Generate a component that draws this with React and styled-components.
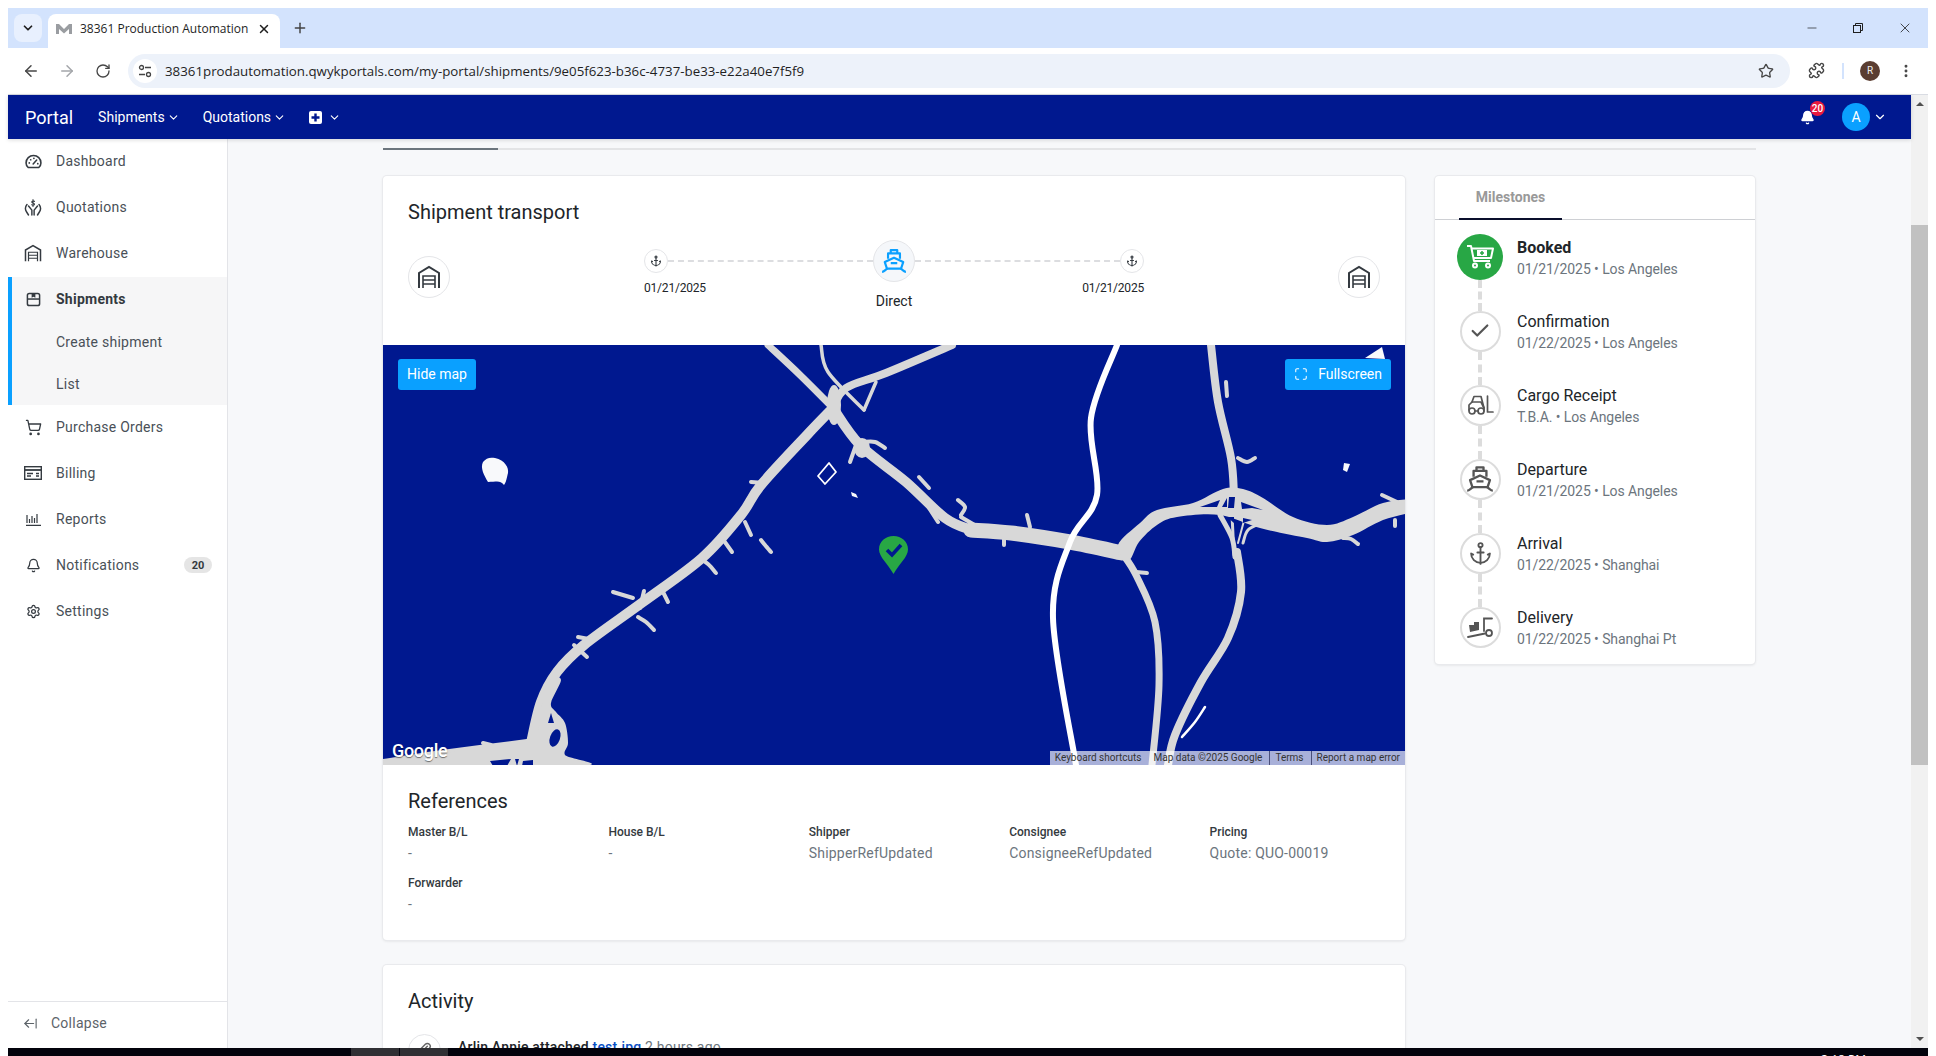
import React from 'react';
import styled, { createGlobalStyle } from 'styled-components';
import {
  Anchor,
  ArrowLeft,
  ArrowLeftFromLine,
  ArrowRight,
  Bell,
  Check,
  ChevronDown,
  EllipsisVertical,
  Paperclip,
  Plus,
  Puzzle,
  RotateCw,
  Settings,
  ShoppingCart,
  Star,
  X,
  Minus,
  Maximize,
} from 'lucide-react';

const GlobalStyle = createGlobalStyle`
  html, body {
    margin: 0;
    padding: 0;
    background: #fff;
    overflow: hidden;
  }
  * {
    box-sizing: border-box;
  }
`;

const Screen = styled.div`
  width: 1936px;
  height: 1056px;
  padding: 8px 8px 0;
  display: flex;
  flex-direction: column;
  overflow: hidden;
  font-family: Roboto, 'Liberation Sans', sans-serif;
  background: #fff;
`;

/* browser chrome */
const TabStrip = styled.div`
  height: 40px;
  flex: none;
  background: #d3e3fd;
  display: flex;
  align-items: flex-end;
  padding-left: 6px;
`;

const TabSearch = styled.div`
  width: 28px;
  height: 28px;
  margin-bottom: 6px;
  border-radius: 8px;
  background: #e8f0fe;
  display: flex;
  align-items: center;
  justify-content: center;
  color: #1f1f1f;
`;

const Tab = styled.div`
  width: 232px;
  height: 34px;
  margin-left: 6px;
  border-radius: 8px 8px 0 0;
  background: #fff;
  display: flex;
  align-items: center;
  padding: 0 9px 5px 8px;
  font-family: 'Open Sans', 'Noto Sans', sans-serif;
  font-size: 12px;
  color: #1f1f1f;
`;

const TabTitle = styled.span`
  margin-left: 8px;
  flex: 1;
  white-space: nowrap;
`;

const NewTab = styled.div`
  margin: 0 0 8px 12px;
  height: 24px;
  display: flex;
  align-items: center;
  color: #444;
`;

const WindowControls = styled.div`
  margin-left: auto;
  align-self: stretch;
  display: flex;
  align-items: center;
  padding-right: 15px;
  gap: 34px;
  color: #1f1f1f;
`;

const Toolbar = styled.div`
  height: 47px;
  flex: none;
  background: #fff;
  border-radius: 8px 8px 0 0;
  border-bottom: 1px solid #d9dce3;
  display: flex;
  align-items: center;
  padding: 0 0 1px 5px;
`;

const ToolButton = styled.div`
  width: 36px;
  display: flex;
  justify-content: center;
  color: ${(p) => (p.$muted ? '#a4a6aa' : '#474747')};
`;

const Omnibox = styled.div`
  width: 1662px;
  height: 34px;
  margin-left: 7px;
  border-radius: 17px;
  background: #edf2fa;
  display: flex;
  align-items: center;
  padding: 0 16px 0 5px;
`;

const SiteChip = styled.div`
  width: 24px;
  height: 24px;
  border-radius: 50%;
  background: #fff;
  display: flex;
  align-items: center;
  justify-content: center;
  color: #444;
`;

const Url = styled.div`
  margin-left: 8px;
  flex: 1;
  font-family: 'Open Sans', 'Noto Sans', sans-serif;
  font-size: 13.3px;
  color: #1f1f1f;
  white-space: nowrap;
`;

const ToolbarRight = styled.div`
  flex: 1;
  display: flex;
  align-items: center;
  padding-left: 18px;
  color: #474747;
`;

const Divider = styled.div`
  width: 2px;
  height: 16px;
  margin: 0 16px 0 17px;
  background: #d3e3fd;
`;

const ProfileChip = styled.div`
  width: 20px;
  height: 20px;
  border-radius: 50%;
  background: #5b3d31;
  color: #eee;
  font-size: 10px;
  display: flex;
  align-items: center;
  justify-content: center;
  margin-right: 18px;
`;

/* portal */
const AppRow = styled.div`
  flex: 1;
  min-height: 0;
  display: flex;
`;

const Page = styled.div`
  flex: 1;
  min-width: 0;
  display: flex;
  flex-direction: column;
`;

const Nav = styled.div`
  height: 44px;
  flex: none;
  background: #00188f;
  color: #fff;
  display: flex;
  align-items: center;
  padding: 0 24px 0 17px;
  position: relative;
  z-index: 2;
  box-shadow: 0 1px 4px rgba(0, 0, 0, 0.15);
`;

const Brand = styled.div`
  font-size: 18px;
  margin-right: 25px;
`;

const NavItem = styled.div`
  display: flex;
  align-items: center;
  gap: 2px;
  font-size: 14px;
  margin-right: 23px;
`;

const NavRight = styled.div`
  margin-left: auto;
  display: flex;
  align-items: center;
`;

const BellWrap = styled.div`
  position: relative;
  display: flex;
  margin-right: 27px;
`;

const BellBadge = styled.span`
  position: absolute;
  top: -9px;
  left: 10px;
  width: 15px;
  height: 15px;
  border-radius: 50%;
  background: #e8193f;
  font-size: 10px;
  font-weight: 500;
  display: flex;
  align-items: center;
  justify-content: center;
`;

const Avatar = styled.div`
  width: 28px;
  height: 28px;
  border-radius: 50%;
  background: #0aa0ff;
  font-size: 14px;
  display: flex;
  align-items: center;
  justify-content: center;
  margin-right: 3px;
`;

const Body = styled.div`
  flex: 1;
  min-height: 0;
  display: flex;
`;

const Sidebar = styled.aside`
  width: 220px;
  flex: none;
  background: #fff;
  border-right: 1px solid #e3e4e8;
  display: flex;
  flex-direction: column;
`;

const SideRow = styled.div`
  height: 46px;
  display: flex;
  align-items: center;
  padding: 0 0 2px 16px;
  font-size: 14px;
  letter-spacing: 0.25px;
  color: ${(p) => (p.$active ? '#343a40' : '#495057')};
  font-weight: ${(p) => (p.$active ? 700 : 400)};
`;

const SideIcon = styled.span`
  width: 18px;
  height: 18px;
  margin-right: 14px;
  display: flex;
  align-items: center;
  justify-content: center;
  color: #343a40;
`;

const SideGroup = styled.div`
  background: #f6f6f7;
  border-left: 4px solid #0aa0ff;

  ${SideRow} {
    padding-left: 12px;
  }
`;

const SubRow = styled.div`
  height: 41px;
  display: flex;
  align-items: center;
  padding: 0 0 ${(p) => p.$lift}px 44px;
  font-size: 14px;
  letter-spacing: 0.25px;
  color: #495057;
`;

const CountBadge = styled.span`
  margin-left: auto;
  margin-right: 15px;
  width: 28px;
  height: 16px;
  border-radius: 8px;
  background: #e5e5e5;
  color: #343a40;
  font-size: 11px;
  font-weight: 700;
  letter-spacing: 0;
  display: flex;
  align-items: center;
  justify-content: center;
`;

const Collapse = styled.div`
  margin-top: auto;
  height: 47px;
  border-top: 1px solid #e3e4e8;
  display: flex;
  align-items: center;
  gap: 13px;
  padding: 0 0 4px 15px;
  font-size: 14px;
  letter-spacing: 0.25px;
  color: #5c6369;
`;

const Main = styled.main`
  flex: 1;
  min-width: 0;
  overflow: hidden;
  background: #f7f8fa;
  padding: 9px 0 0 155px;
`;

const TabLine = styled.div`
  width: 1373px;
  height: 2px;
  background: #e3e4e6;
  margin-bottom: 26px;
`;

const TabLineActive = styled.div`
  width: 115px;
  height: 2px;
  background: #6c757d;
`;

const Columns = styled.div`
  display: grid;
  grid-template-columns: 1022px 320px;
  column-gap: 30px;
  align-items: start;
`;

const LeftColumn = styled.div`
  display: flex;
  flex-direction: column;
  gap: 25px;
`;

const Card = styled.section`
  background: #fff;
  border-radius: 4px;
  box-shadow: 0 0 0 1px #e9eaed, 0 1px 3px rgba(0, 0, 0, 0.12);
  overflow: hidden;
`;

const CardTitle = styled.h2`
  margin: 0;
  font-size: 20px;
  line-height: 24px;
  font-weight: 400;
  color: #212529;
`;

const TransportHead = styled.div`
  height: 169px;
  padding: 24px 25px 0;
`;

const Route = styled.div`
  display: flex;
  align-items: flex-start;
  margin-top: 16px;
  color: #212529;
`;

const Node = styled.div`
  flex: none;
  width: ${(p) => p.$size}px;
  height: ${(p) => p.$size}px;
  margin-top: ${(p) => p.$top || 0}px;
  border-radius: 50%;
  border: 1px solid #e4e5e8;
  background: ${(p) => p.$bg || '#fff'};
  color: ${(p) => p.$color || '#343a40'};
  display: flex;
  align-items: center;
  justify-content: center;
`;

const RouteSpacer = styled.div`
  flex: 1;
`;

const DashLine = styled.div`
  flex: none;
  width: 205px;
  margin-top: 20px;
  border-top: 2px dashed #dcdde0;
`;

const Stop = styled.div`
  flex: none;
  width: 24px;
  display: flex;
  flex-direction: column;
  align-items: ${(p) => (p.$end ? 'flex-end' : 'flex-start')};
`;

const StopDate = styled.div`
  margin-top: 7px;
  font-size: 12px;
  line-height: 16px;
  letter-spacing: -0.2px;
  white-space: nowrap;
`;

const Center = styled.div`
  flex: none;
  width: 42px;
  display: flex;
  flex-direction: column;
  align-items: center;
`;

const CenterLabel = styled.div`
  margin-top: 11px;
  font-size: 14px;
  line-height: 16px;
`;

const MapBox = styled.div`
  height: 420px;
  position: relative;
  overflow: hidden;
  background: #00188f;
`;

const MapCanvas = styled.svg`
  display: block;
  width: 100%;
  height: 100%;
`;

const MapButton = styled.div`
  position: absolute;
  top: 14px;
  ${(p) => (p.$right ? 'right: 14px;' : 'left: 15px;')}
  height: 31px;
  padding: 0 9px 1px;
  border-radius: 3px;
  background: #0aa0ff;
  color: #fff;
  font-size: 14px;
  display: flex;
  align-items: center;
  gap: 10px;
`;

const Pin = styled.svg`
  position: absolute;
  left: 496px;
  top: 191px;
`;

const GoogleMark = styled.div`
  position: absolute;
  left: 9px;
  bottom: 4px;
  color: #fff;
  font-size: 18px;
  font-weight: 500;
  letter-spacing: -0.3px;
  text-shadow: 0 1px 1px rgba(0, 0, 0, 0.5);
`;

const Attribution = styled.div`
  position: absolute;
  right: 0;
  bottom: 0;
  height: 14px;
  display: flex;
  background: rgba(255, 255, 255, 0.66);
  font-size: 10px;
  line-height: 14px;
  color: #333;
`;

const AttrItem = styled.span`
  padding: 0 7px 0 5px;
  white-space: nowrap;
  border-left: ${(p) => (p.$line ? '1px solid #4a4f7a' : 'none')};

  &:last-child {
    padding-right: 5px;
  }
`;

const References = styled.div`
  height: 175px;
  padding: 24px 25px 0;
`;

const RefGrid = styled.div`
  margin-top: 10px;
  display: grid;
  grid-template-columns: repeat(5, 200.4px);
  row-gap: 10px;
`;

const RefLabel = styled.div`
  font-size: 12px;
  line-height: 18px;
  font-weight: 500;
  color: #343a40;
  margin-bottom: 2px;
`;

const RefValue = styled.div`
  font-size: 14px;
  line-height: 21px;
  color: #6c757d;
  letter-spacing: 0.2px;
`;

const Activity = styled(Card)`
  height: 300px;
  padding: 24px 25px;
  flex: none;
`;

const ActivityRow = styled.div`
  margin-top: 21px;
  display: flex;
  gap: 17px;
`;

const ActivityText = styled.div`
  padding-top: 5px;
  font-size: 14px;
  font-weight: 500;
  letter-spacing: 0.2px;
  color: #212529;

  a {
    color: #0a4fc4;
  }

  span {
    font-weight: 400;
    color: #6c757d;
  }
`;

const MilestoneTabs = styled.div`
  height: 44px;
  border-bottom: 1px solid #ced0d4;
  padding-left: 24px;
  display: flex;
`;

const MilestoneTab = styled.div`
  width: 103px;
  height: 44px;
  border-bottom: 2px solid #0a0f2c;
  font-size: 14px;
  font-weight: 700;
  color: #999;
  display: flex;
  align-items: center;
  justify-content: center;
`;

const MilestoneRow = styled.div`
  height: 74px;
  display: flex;
  align-items: center;
  position: relative;
  padding-left: 22px;

  &:not(:last-child)::after {
    content: '';
    position: absolute;
    left: 43px;
    top: ${(p) => (p.$current ? 60 : 58)}px;
    height: ${(p) => (p.$current ? 31 : 33)}px;
    border-left: 4px dashed #dcdcdc;
  }
`;

const MilestoneSlot = styled.div`
  width: 46px;
  display: flex;
  justify-content: center;
`;

const MilestoneIcon = styled.div`
  width: ${(p) => (p.$current ? 46 : 41)}px;
  height: ${(p) => (p.$current ? 46 : 41)}px;
  border-radius: 50%;
  border: ${(p) => (p.$current ? 'none' : '2px solid #dcdcdc')};
  background: ${(p) => (p.$current ? '#28a745' : '#fff')};
  color: ${(p) => (p.$current ? '#fff' : '#555')};
  display: flex;
  align-items: center;
  justify-content: center;
`;

const MilestoneText = styled.div`
  margin-left: 14px;
  padding-top: 2px;
`;

const MilestoneTitle = styled.div`
  font-size: 16px;
  line-height: 20px;
  color: #212529;
  font-weight: ${(p) => (p.$current ? 700 : 400)};
`;

const MilestoneSub = styled.div`
  margin-top: 1px;
  font-size: 14px;
  line-height: 20px;
  letter-spacing: -0.08px;
  color: #6c757d;
`;

const Scrollbar = styled.div`
  width: 17px;
  flex: none;
  background: #f1f1f1;
  display: flex;
  flex-direction: column;
  align-items: center;
  justify-content: space-between;
  position: relative;
  padding: 7px 0;
`;

const ScrollThumb = styled.div`
  position: absolute;
  top: 130px;
  left: 0;
  right: 0;
  height: 540px;
  background: #c1c1c1;
`;

const ScrollArrow = styled.div`
  width: 0;
  height: 0;
  border-left: 4px solid transparent;
  border-right: 4px solid transparent;
  ${(p) => (p.$down ? 'border-top: 4px solid #505050;' : 'border-bottom: 4px solid #505050;')}
`;

const Taskbar = styled.div`
  height: 8px;
  flex: none;
  background: #03030c;
  display: flex;
  overflow: hidden;
  color: #fff;
  font-family: 'Open Sans', sans-serif;
  font-size: 12px;
  line-height: 16px;
  padding-left: 343px;
`;

const TaskSlot = styled.div`
  width: 48px;
  margin-right: 1px;
  background: #303034;
`;

const Clock = styled.div`
  margin-left: auto;
  margin-right: 62px;
  padding-top: 4px;
`;

/* drawings */
const GaugeIcon = () => (
  <svg width="17" height="15" viewBox="0 0 24 20" fill="none" stroke="currentColor" strokeWidth="2.2" strokeLinecap="round">
    <path d="M4.5 18.5C2.5 16.6 1.5 14.5 1.5 12a10.5 10.5 0 0 1 21 0c0 2.5-1 4.6-3 6.5z" />
    <path d="M11.5 13.5l5-5.5" />
    <path d="M6 12h.1M8 7.5h.1M12.5 5.5h.1M18 13h.1" strokeWidth="2.4" />
  </svg>
);

const Warehouse = ({ size = 18 }) => (
  <svg width={size} height={size} viewBox="0 0 24 24" fill="none" stroke="currentColor" strokeWidth="2">
    <path d="M2 23V8l10-6 10 6v15" />
    <path d="M6 23V11h12v12M6 15h12M6 19h12" strokeWidth="1.6" />
  </svg>
);

const HandsDollar = () => (
  <svg width="19" height="17" viewBox="0 0 24 22" fill="none" stroke="currentColor" strokeWidth="1.9" strokeLinecap="round" strokeLinejoin="round">
    <path d="M4 7C1.5 10 1.5 14 3.5 17l2.5 4M20 7c2.5 3 2.5 7 .5 10L18 21" />
    <path d="M6 9l4.5 5.5V21M18 9l-4.5 5.5V21" />
    <path d="M14 3C13.3 1.8 10.3 1.9 10.3 3.500c0 2 3.700 1.200 3.700 3.200 0 1.600-3 1.700-3.800.6M12 .5V9.500" strokeWidth="1.4" />
  </svg>
);

const BoxIcon = () => (
  <svg width="15" height="15" viewBox="0 0 16 16" fill="none" stroke="currentColor" strokeWidth="1.6">
    <rect x="1.5" y="1.5" width="13" height="13" rx="2" />
    <path d="M1.5 7.5h13" />
    <path d="M6 1h4v5l-2-1-2 1z" fill="currentColor" stroke="none" />
  </svg>
);

const BillingIcon = () => (
  <svg width="18" height="14" viewBox="0 0 18 14" fill="none" stroke="currentColor" strokeWidth="1.4">
    <rect x="0.7" y="0.7" width="16.6" height="12.6" />
    <path d="M1 4h16" strokeWidth="1.8" />
    <path d="M3 7.5h6M3 10h4M12 7.5h3M12 10h3" />
  </svg>
);

const ReportsIcon = () => (
  <svg width="15" height="13" viewBox="0 0 15 13" fill="none" stroke="currentColor" strokeWidth="1.2">
    <path d="M0 12.4h15M1 2v8M3.5 6v4M6 3v7M8.5 5v5M11 1v9" />
  </svg>
);

const ShipIcon = ({ size = 22 }) => (
  <svg width={size} height={size} viewBox="0 0 24 24" fill="none" stroke="currentColor" strokeWidth="2" strokeLinejoin="round">
    <path d="M9 2h6v3H9zM6.5 10V5h11v5" />
    <path d="M3.5 13 12 9l8.5 4-2 6h-13z" />
    <path d="M1 22c2 0 3-2 5-3M23 22c-2 0-3-2-5-3M9 14h6" />
  </svg>
);

const CartPlusIcon = () => (
  <svg width="28" height="26" viewBox="0 0 28 26" fill="none" stroke="currentColor" strokeWidth="2" strokeLinejoin="round">
    <path d="M1 2h4l3 15h16" />
    <path d="M5.5 4.5H27l-2 9.5H7.5" />
    <circle cx="9" cy="21.5" r="2" />
    <circle cx="22" cy="21.5" r="2" />
    <path d="M11 6h10v6H11z" fill="currentColor" stroke="none" />
    <path d="M16 7v4M14 9h4" stroke="#28a745" strokeWidth="1.5" />
  </svg>
);

const DollyIcon = () => (
  <svg width="27" height="23" viewBox="0 0 27 23" fill="none" stroke="currentColor" strokeWidth="1.8" strokeLinecap="round">
    <path d="M17 15V2.5h8" />
    <circle cx="22" cy="17" r="3" />
    <path d="M1 21l17-3.5" />
    <path d="M2 9h5V6h5v8l-9 2z" fill="currentColor" stroke="none" />
  </svg>
);

const ForkliftIcon = () => (
  <svg width="27" height="20" viewBox="0 0 27 20" fill="none" stroke="currentColor" strokeWidth="1.7" strokeLinejoin="round" strokeLinecap="round">
    <path d="M5 7l2-5.500h7L17 13v3" />
    <path d="M2 15v-5l3-3h9l3 6" />
    <path d="M8 16h3" />
    <circle cx="5" cy="16" r="3" />
    <circle cx="14" cy="16" r="3" />
    <path d="M20.5 1v16H26" />
  </svg>
);

const SliderIcon = () => (
  <svg width="14" height="14" viewBox="0 0 14 14" fill="none" stroke="currentColor" strokeWidth="1.3">
    <circle cx="3.5" cy="3.5" r="2" />
    <path d="M7 3.5h6M1 10.5h6" />
    <circle cx="10.5" cy="10.5" r="2" />
  </svg>
);

const Favicon = () => (
  <svg width="16" height="10" viewBox="0 0 16 10" fill="#9a9da1">
    <path d="M0 10V0h3l5 5 5-5h3v10h-3V5L8 9.5 3 5v5z" />
  </svg>
);

const PlusSquare = () => (
  <svg width="13" height="13" viewBox="0 0 13 13">
    <rect width="13" height="13" rx="2" fill="#fff" />
    <path d="M6.5 2.5v8M2.5 6.5h8" stroke="#00188f" strokeWidth="2.4" />
  </svg>
);

const RestoreIcon = () => (
  <svg width="10" height="10" viewBox="0 0 10 10" fill="none" stroke="currentColor">
    <rect x="0.5" y="2.5" width="7" height="7" />
    <path d="M2.5 2.5v-2h7v7h-2" />
  </svg>
);

// catmull-rom through the points, so the roads don't look like polylines
const smooth = (pts, closed = false) => {
  const at = (i) =>
    closed ? pts[(i + pts.length) % pts.length] : pts[Math.max(0, Math.min(pts.length - 1, i))];
  const count = closed ? pts.length : pts.length - 1;
  let d = `M${pts[0][0]} ${pts[0][1]}`;
  for (let i = 0; i < count; i++) {
    const [p0, p1, p2, p3] = [at(i - 1), at(i), at(i + 1), at(i + 2)];
    const c1 = [p1[0] + (p2[0] - p0[0]) / 6, p1[1] + (p2[1] - p0[1]) / 6];
    const c2 = [p2[0] - (p3[0] - p1[0]) / 6, p2[1] - (p3[1] - p1[1]) / 6];
    d += `C${c1[0]} ${c1[1]} ${c2[0]} ${c2[1]} ${p2[0]} ${p2[1]}`;
  }
  return closed ? `${d}z` : d;
};

const roads = [
  { w: 9, pts: [[-3, 419], [63, 409], [148, 398]] },
  { w: 10, pts: [[148, 398], [158, 357], [174, 327], [201, 300], [260, 257], [319, 213], [358, 170], [378, 140], [424, 90], [450, 63]] },
  { w: 7, pts: [[450, 63], [417, 30], [385, 0]] },
  { w: 8, pts: [[450, 63], [463, 43], [503, 28], [569, 0]] },
  { w: 3.5, pts: [[438, 0], [445, 27], [481, 65]] },
  { w: 3.5, pts: [[481, 65], [493, 37]] },
  { w: 10, pts: [[450, 63], [477, 100], [523, 137], [562, 173], [588, 185]] },
  { w: 15, pts: [[588, 185], [628, 188], [687, 197], [739, 208]] },
  { w: 7, pts: [[739, 208], [753, 230], [772, 277], [776, 340], [769, 420]] },
  { w: 8, pts: [[828, 0], [835, 57], [848, 113], [851, 150]] },
  { w: 8, pts: [[854, 207], [858, 247], [845, 293], [818, 337], [792, 390], [785, 420]] },
  { w: 5, pts: [[837, 170], [849, 193], [852, 212]] },
  { w: 3, pts: [[879, 178], [865, 185], [860, 198]] },
  { w: 3, pts: [[849, 170], [851, 210]] },
  { w: 2, pts: [[862, 172], [855, 198]] },
];

const ramps = [
  [[230, 247], [250, 253]], [[261, 246], [257, 263]], [[255, 272], [263, 277], [271, 285]],
  [[195, 292], [211, 295]], [[191, 300], [204, 312]], [[362, 177], [368, 190]],
  [[339, 193], [349, 207]], [[316, 213], [325, 219], [333, 228]], [[280, 247], [285, 257]],
  [[368, 137], [381, 138]], [[378, 195], [382, 200], [388, 207]], [[480, 97], [492, 97], [502, 103]],
  [[473, 100], [467, 117]], [[536, 132], [546, 143]], [[575, 155], [582, 162], [578, 170]],
  [[546, 163], [555, 177]], [[578, 172], [595, 182]], [[644, 170], [647, 182]],
  [[621, 192], [621, 200]], [[753, 227], [764, 228]], [[843, 37], [844, 51]],
  [[855, 113], [864, 117], [872, 113]], [[999, 150], [1014, 157]], [[960, 193], [968, 194], [975, 199]],
  [[1012, 175], [1012, 181]], [[100, 398], [108, 400]],
];

const bigInterchange = [
  [735, 200], [757, 178], [774, 165], [810, 158], [840, 144], [860, 144], [880, 153], [910, 172],
  [944, 180], [970, 172], [1000, 158], [1030, 155], [1030, 166], [1000, 175], [970, 190], [944, 197],
  [924, 193], [877, 183], [837, 170], [794, 172], [774, 180], [756, 197], [746, 215],
];

const interchangeHoles = [
  'M817 162 837 155 834 162z',
  'M839 162 844 153 844 162z',
  'M846 152 852 152 851 163 845 163z',
  'M858 157 880 165 869 163 859 164z',
  'M844 172 851 172 851 178z',
  'M860 173 869 175 860 178z',
];

const bottomLeft = [
  [-5, 418], [50, 412], [73, 406], [107, 400], [143, 397], [155, 385], [157, 368], [167, 335], [178, 335],
  [168, 358], [173, 367], [182, 378], [185, 398], [182, 410], [198, 421], [-5, 421],
];

const whiteBits = [
  'M112 113C122 115 126 123 125 128 124 132 123 138 121 140 117 135 114 137 105 137 101 130 97 123 100 117 103 113 107 112 112 113z',
  'M961 118 967 119 964 127 960 125z',
  'M468 147 473 149 475 153 469 151z',
  'M982 13 999 2 1002 14z',
];

const navItems = [
  { label: 'Dashboard', icon: <GaugeIcon /> },
  { label: 'Quotations', icon: <HandsDollar /> },
  { label: 'Warehouse', icon: <Warehouse /> },
];

const navItemsBelow = [
  { label: 'Purchase Orders', icon: <ShoppingCart size={17} strokeWidth={1.8} /> },
  { label: 'Billing', icon: <BillingIcon /> },
  { label: 'Reports', icon: <ReportsIcon /> },
  { label: 'Notifications', icon: <Bell size={15} strokeWidth={2} />, count: 20 },
  { label: 'Settings', icon: <Settings size={15} strokeWidth={2} /> },
];

const references = [
  ['Master B/L', '-'],
  ['House B/L', '-'],
  ['Shipper', 'ShipperRefUpdated'],
  ['Consignee', 'ConsigneeRefUpdated'],
  ['Pricing', 'Quote: QUO-00019'],
  ['Forwarder', '-'],
];

const milestones = [
  { title: 'Booked', sub: '01/21/2025 • Los Angeles', icon: <CartPlusIcon />, current: true },
  { title: 'Confirmation', sub: '01/22/2025 • Los Angeles', icon: <Check size={22} strokeWidth={2.4} /> },
  { title: 'Cargo Receipt', sub: 'T.B.A. • Los Angeles', icon: <ForkliftIcon /> },
  { title: 'Departure', sub: '01/21/2025 • Los Angeles', icon: <ShipIcon size={28} /> },
  { title: 'Arrival', sub: '01/22/2025 • Shanghai', icon: <Anchor size={25} strokeWidth={1.8} /> },
  { title: 'Delivery', sub: '01/22/2025 • Shanghai Pt', icon: <DollyIcon /> },
];

export default function App() {
  return (
    <Screen>
      <GlobalStyle />
      <TabStrip>
        <TabSearch>
          <ChevronDown size={14} strokeWidth={3} />
        </TabSearch>
        <Tab>
          <Favicon />
          <TabTitle>38361 Production Automation</TabTitle>
          <X size={14} strokeWidth={2.5} />
        </Tab>
        <NewTab>
          <Plus size={16} strokeWidth={2.2} />
        </NewTab>
        <WindowControls>
          <Minus size={14} strokeWidth={1.2} />
          <RestoreIcon />
          <X size={16} strokeWidth={1.2} />
        </WindowControls>
      </TabStrip>

      <Toolbar>
        <ToolButton>
          <ArrowLeft size={18} strokeWidth={2} />
        </ToolButton>
        <ToolButton $muted>
          <ArrowRight size={18} strokeWidth={2} />
        </ToolButton>
        <ToolButton>
          <RotateCw size={16} strokeWidth={2} />
        </ToolButton>
        <Omnibox>
          <SiteChip>
            <SliderIcon />
          </SiteChip>
          <Url>38361prodautomation.qwykportals.com/my-portal/shipments/9e05f623-b36c-4737-be33-e22a40e7f5f9</Url>
          <Star size={16} strokeWidth={2} color="#474747" />
        </Omnibox>
        <ToolbarRight>
          <Puzzle size={17} strokeWidth={2} />
          <Divider />
          <ProfileChip>R</ProfileChip>
          <EllipsisVertical size={16} strokeWidth={2.4} />
        </ToolbarRight>
      </Toolbar>

      <AppRow>
        <Page>
          <Nav>
            <Brand>Portal</Brand>
            <NavItem>
              Shipments <ChevronDown size={13} />
            </NavItem>
            <NavItem>
              Quotations <ChevronDown size={13} />
            </NavItem>
            <NavItem>
              <PlusSquare />
              <ChevronDown size={13} style={{ marginLeft: 4 }} />
            </NavItem>
            <NavRight>
              <BellWrap>
                <Bell size={15} fill="#fff" />
                <BellBadge>20</BellBadge>
              </BellWrap>
              <Avatar>A</Avatar>
              <ChevronDown size={14} />
            </NavRight>
          </Nav>

          <Body>
            <Sidebar>
              {navItems.map((item) => (
                <SideRow key={item.label}>
                  <SideIcon>{item.icon}</SideIcon>
                  {item.label}
                </SideRow>
              ))}
              <SideGroup>
                <SideRow $active>
                  <SideIcon>
                    <BoxIcon />
                  </SideIcon>
                  Shipments
                </SideRow>
                <SubRow $lift={3}>Create shipment</SubRow>
                <SubRow $lift={2}>List</SubRow>
              </SideGroup>
              {navItemsBelow.map((item) => (
                <SideRow key={item.label}>
                  <SideIcon>{item.icon}</SideIcon>
                  {item.label}
                  {item.count && <CountBadge>{item.count}</CountBadge>}
                </SideRow>
              ))}
              <Collapse>
                <ArrowLeftFromLine size={15} strokeWidth={1.8} />
                Collapse
              </Collapse>
            </Sidebar>

            <Main>
              <TabLine>
                <TabLineActive />
              </TabLine>
              <Columns>
                <LeftColumn>
                  <Card>
                    <TransportHead>
                      <CardTitle>Shipment transport</CardTitle>
                      <Route>
                        <Node $size={42} $top={16}>
                          <Warehouse size={24} />
                        </Node>
                        <RouteSpacer />
                        <Stop>
                          <Node $size={24} $top={9}>
                            <Anchor size={12} strokeWidth={2.2} />
                          </Node>
                          <StopDate>01/21/2025</StopDate>
                        </Stop>
                        <DashLine />
                        <Center>
                          <Node $size={42} $bg="#f5f7fa" $color="#0aa0ff">
                            <ShipIcon size={26} />
                          </Node>
                          <CenterLabel>Direct</CenterLabel>
                        </Center>
                        <DashLine />
                        <Stop $end>
                          <Node $size={24} $top={9}>
                            <Anchor size={12} strokeWidth={2.2} />
                          </Node>
                          <StopDate>01/21/2025</StopDate>
                        </Stop>
                        <RouteSpacer />
                        <Node $size={42} $top={16}>
                          <Warehouse size={24} />
                        </Node>
                      </Route>
                    </TransportHead>

                    <MapBox>
                      <MapCanvas viewBox="0 0 1022 420">
                        <g fill="none" stroke="#d8d8d8" strokeLinecap="round" strokeLinejoin="round">
                          {roads.map((r) => (
                            <path key={r.pts.join()} d={smooth(r.pts)} strokeWidth={r.w} />
                          ))}
                          {ramps.map((pts) => (
                            <path key={pts.join()} d={smooth(pts)} strokeWidth="4" />
                          ))}
                        </g>
                        <g fill="#d8d8d8">
                          <path d={smooth(bigInterchange, true)} />
                          <path d={smooth(bottomLeft, true)} />
                          <ellipse cx="451" cy="60" rx="7" ry="20" />
                          <ellipse cx="479" cy="103" rx="8" ry="10" />
                        </g>
                        <g fill="#00188f">
                          {interchangeHoles.map((d) => (
                            <path key={d} d={d} />
                          ))}
                          <ellipse cx="172" cy="393" rx="5" ry="9" transform="rotate(20 172 393)" />
                          <path d="M107 416 128 414 124 421 110 421zM132 414 136 414 134 421zM140 416 150 415 150 421 139 421z" />
                          <path d="M168 368 171 378 165 378z" />
                        </g>
                        <g fill="none" stroke="#fff" strokeLinejoin="round" strokeLinecap="round">
                          <path
                            d={smooth([[734, 0], [708, 73], [714, 150], [687, 197], [670, 273], [693, 420]])}
                            strokeWidth="6"
                          />
                          <path d="M446 118 453 127 442 139 435 131z" strokeWidth="1.8" />
                          <path d={smooth([[822, 362], [812, 377], [799, 392]])} strokeWidth="2.5" />
                        </g>
                        <g fill="#f8f9fb">
                          {whiteBits.map((d) => (
                            <path key={d} d={d} />
                          ))}
                        </g>
                      </MapCanvas>
                      <MapButton>Hide map</MapButton>
                      <MapButton $right>
                        <Maximize size={14} strokeWidth={1.8} />
                        Fullscreen
                      </MapButton>
                      <Pin width="29" height="38" viewBox="0 0 29 38">
                        <path d="M14.5 38C9 28 0 21 0 13.5 0 5.5 6.5 0 14.5 0S29 5.5 29 13.5C29 21 20 28 14.5 38z" fill="#28a745" />
                        <path d="M8 14l5 5 9-10" fill="none" stroke="#00188f" strokeWidth="3.6" />
                      </Pin>
                      <GoogleMark>Google</GoogleMark>
                      <Attribution>
                        <AttrItem>Keyboard shortcuts</AttrItem>
                        <AttrItem>Map data ©2025 Google</AttrItem>
                        <AttrItem $line>Terms</AttrItem>
                        <AttrItem $line>Report a map error</AttrItem>
                      </Attribution>
                    </MapBox>

                    <References>
                      <CardTitle>References</CardTitle>
                      <RefGrid>
                        {references.map(([label, value]) => (
                          <div key={label}>
                            <RefLabel>{label}</RefLabel>
                            <RefValue>{value}</RefValue>
                          </div>
                        ))}
                      </RefGrid>
                    </References>
                  </Card>

                  <Activity>
                    <CardTitle>Activity</CardTitle>
                    <ActivityRow>
                      <Node $size={33}>
                        <Paperclip size={17} color="#666" />
                      </Node>
                      <ActivityText>
                        Arlin Annie attached <a>test.jpg</a> <span>2 hours ago</span>
                      </ActivityText>
                    </ActivityRow>
                  </Activity>
                </LeftColumn>

                <Card>
                  <MilestoneTabs>
                    <MilestoneTab>Milestones</MilestoneTab>
                  </MilestoneTabs>
                  {milestones.map((m) => (
                    <MilestoneRow key={m.title} $current={m.current}>
                      <MilestoneSlot>
                        <MilestoneIcon $current={m.current}>{m.icon}</MilestoneIcon>
                      </MilestoneSlot>
                      <MilestoneText>
                        <MilestoneTitle $current={m.current}>{m.title}</MilestoneTitle>
                        <MilestoneSub>{m.sub}</MilestoneSub>
                      </MilestoneText>
                    </MilestoneRow>
                  ))}
                </Card>
              </Columns>
            </Main>
          </Body>
        </Page>
        <Scrollbar>
          <ScrollThumb />
          <ScrollArrow />
          <ScrollArrow $down />
        </Scrollbar>
      </AppRow>

      <Taskbar>
        <TaskSlot />
        <TaskSlot />
        <Clock>3:18 PM</Clock>
      </Taskbar>
    </Screen>
  );
}
